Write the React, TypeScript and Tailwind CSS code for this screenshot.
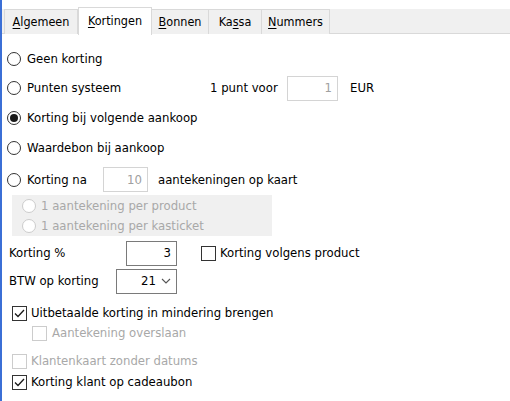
import React from 'react';

const font = "font-['DejaVu_Sans_Condensed','DejaVu_Sans',sans-serif] text-[13px]";

const Radio = ({ checked = false, disabled = false }: { checked?: boolean; disabled?: boolean }) => (
  <span
    className={`inline-flex items-center justify-center w-[14px] h-[14px] rounded-full border bg-white shrink-0 ${
      disabled ? 'border-[#cccccc]' : 'border-[#333333]'
    }`}
  >
    {checked && <span className="w-[8px] h-[8px] rounded-full bg-[#1a1a1a]" />}
  </span>
);

const Check = ({ checked = false, disabled = false }: { checked?: boolean; disabled?: boolean }) => (
  <span
    className={`inline-flex items-center justify-center w-[15px] h-[15px] border bg-white shrink-0 ${
      disabled ? 'border-[#cccccc]' : 'border-[#333333]'
    }`}
  >
    {checked && (
      <svg width="11" height="9" viewBox="0 0 11 9" fill="none">
        <path d="M1 4.5 L4 7.5 L10 1" stroke="#1a1a1a" strokeWidth="1.3" />
      </svg>
    )}
  </span>
);

const Field = ({ value, disabled = false, w }: { value: string; disabled?: boolean; w: string }) => (
  <div
    className={`${w} h-[25px] border flex items-center justify-end pr-[5px] bg-white ${
      disabled ? 'border-[#d4d4d4] text-[#a0a0a0]' : 'border-[#7a7a7a] text-black'
    }`}
  >
    {value}
  </div>
);

const tabs = [
  { pre: '', u: 'A', post: 'lgemeen', w: 'w-[74px]' },
  { pre: '', u: 'K', post: 'ortingen', w: 'w-[74px]', active: true },
  { pre: '', u: 'B', post: 'onnen', w: 'w-[57px]' },
  { pre: 'Ka', u: 's', post: 'sa', w: 'w-[53px]' },
  { pre: '', u: 'N', post: 'ummers', w: 'w-[68px]' },
];

export default function App() {
  return (
    <div className={`w-[510px] h-[401px] bg-white border-l-2 border-[#3b6fd6] text-black overflow-hidden ${font}`}>
      {/* tab strip */}
      <div className="pt-[6px]">
        <div className="h-[28px] flex items-end pl-[2px] relative">
          <div className="absolute left-0 right-0 top-[3px] bottom-0 bg-[#f0f0f0] border-b border-[#d9d9d9]" />
          {tabs.map((t, i) => (
            <div
              key={i}
              className={`${t.w} relative flex items-center justify-center border-r border-[#d9d9d9] ${
                t.active ? 'h-[28px] bg-white border-l border-t -mb-px' : 'h-[25px] bg-[#f0f0f0] border-t'
              } ${i === 0 ? 'border-l' : ''}`}
            >
              <span className="text-[12.5px]">
                {t.pre}
                <span className="underline underline-offset-2">{t.u}</span>
                {t.post}
              </span>
            </div>
          ))}
        </div>
      </div>

      <div className="pl-[4px]">
        <div className="h-[28px] mt-[11px] ml-[1px] flex items-center gap-[6px]">
          <Radio />
          <span>Geen korting</span>
        </div>
        <div className="h-[30px] ml-[1px] flex items-center">
          <Radio />
          <span className="ml-[6px] w-[183px]">Punten systeem</span>
          <span className="w-[77px]">1 punt voor</span>
          <Field value="1" disabled w="w-[51px]" />
          <span className="ml-[12px]">EUR</span>
        </div>
        <div className="h-[30px] ml-[1px] flex items-center gap-[6px]">
          <Radio checked />
          <span>Korting bij volgende aankoop</span>
        </div>
        <div className="h-[30px] ml-[1px] flex items-center gap-[6px]">
          <Radio />
          <span>Waardebon bij aankoop</span>
        </div>
        <div className="h-[31px] mt-[1px] ml-[1px] flex items-center">
          <Radio />
          <span className="ml-[6px] w-[76px]">Korting na</span>
          <Field value="10" disabled w="w-[45px]" />
          <span className="ml-[10px]">aantekeningen op kaart</span>
        </div>
        <div className="ml-[6px] w-[260px] h-[41px] bg-[#f0f0f0] flex flex-col justify-center pl-[10px] text-[#a8a8a8]">
          <div className="h-[20px] flex items-center gap-[5px]">
            <Radio disabled />
            <span>1 aantekening per product</span>
          </div>
          <div className="h-[20px] flex items-center gap-[5px]">
            <Radio disabled />
            <span>1 aantekening per kasticket</span>
          </div>
        </div>

        <div className="h-[26px] mt-[4px] flex items-center">
          <span className="ml-[3px] w-[117px]">Korting %</span>
          <Field value="3" w="w-[51px]" />
          <span className="ml-[24px] flex items-center gap-[4px]">
            <Check />
            <span>Korting volgens product</span>
          </span>
        </div>
        <div className="h-[26px] mt-[2px] flex items-center">
          <span className="ml-[3px] w-[107px]">BTW op korting</span>
          <div className="w-[61px] h-[25px] border border-[#7a7a7a] flex items-center justify-end pr-[5px] gap-[5px]">
            <span>21</span>
            <svg width="10" height="6" viewBox="0 0 10 6" fill="none">
              <path d="M1 1 L5 5 L9 1" stroke="#555" strokeWidth="1.1" />
            </svg>
          </div>
        </div>

        <div className="h-[20px] mt-[9px] ml-[6px] flex items-center gap-[4px]">
          <Check checked />
          <span>Uitbetaalde korting in mindering brengen</span>
        </div>
        <div className="h-[20px] ml-[26px] flex items-center gap-[5px] text-[#a8a8a8]">
          <Check disabled />
          <span>Aantekening overslaan</span>
        </div>
        <div className="h-[20px] mt-[8px] ml-[6px] flex items-center gap-[4px] text-[#a8a8a8]">
          <Check disabled />
          <span>Klantenkaart zonder datums</span>
        </div>
        <div className="h-[20px] mt-[1px] ml-[6px] flex items-center gap-[4px]">
          <Check checked />
          <span>Korting klant op cadeaubon</span>
        </div>
      </div>
    </div>
  );
}
